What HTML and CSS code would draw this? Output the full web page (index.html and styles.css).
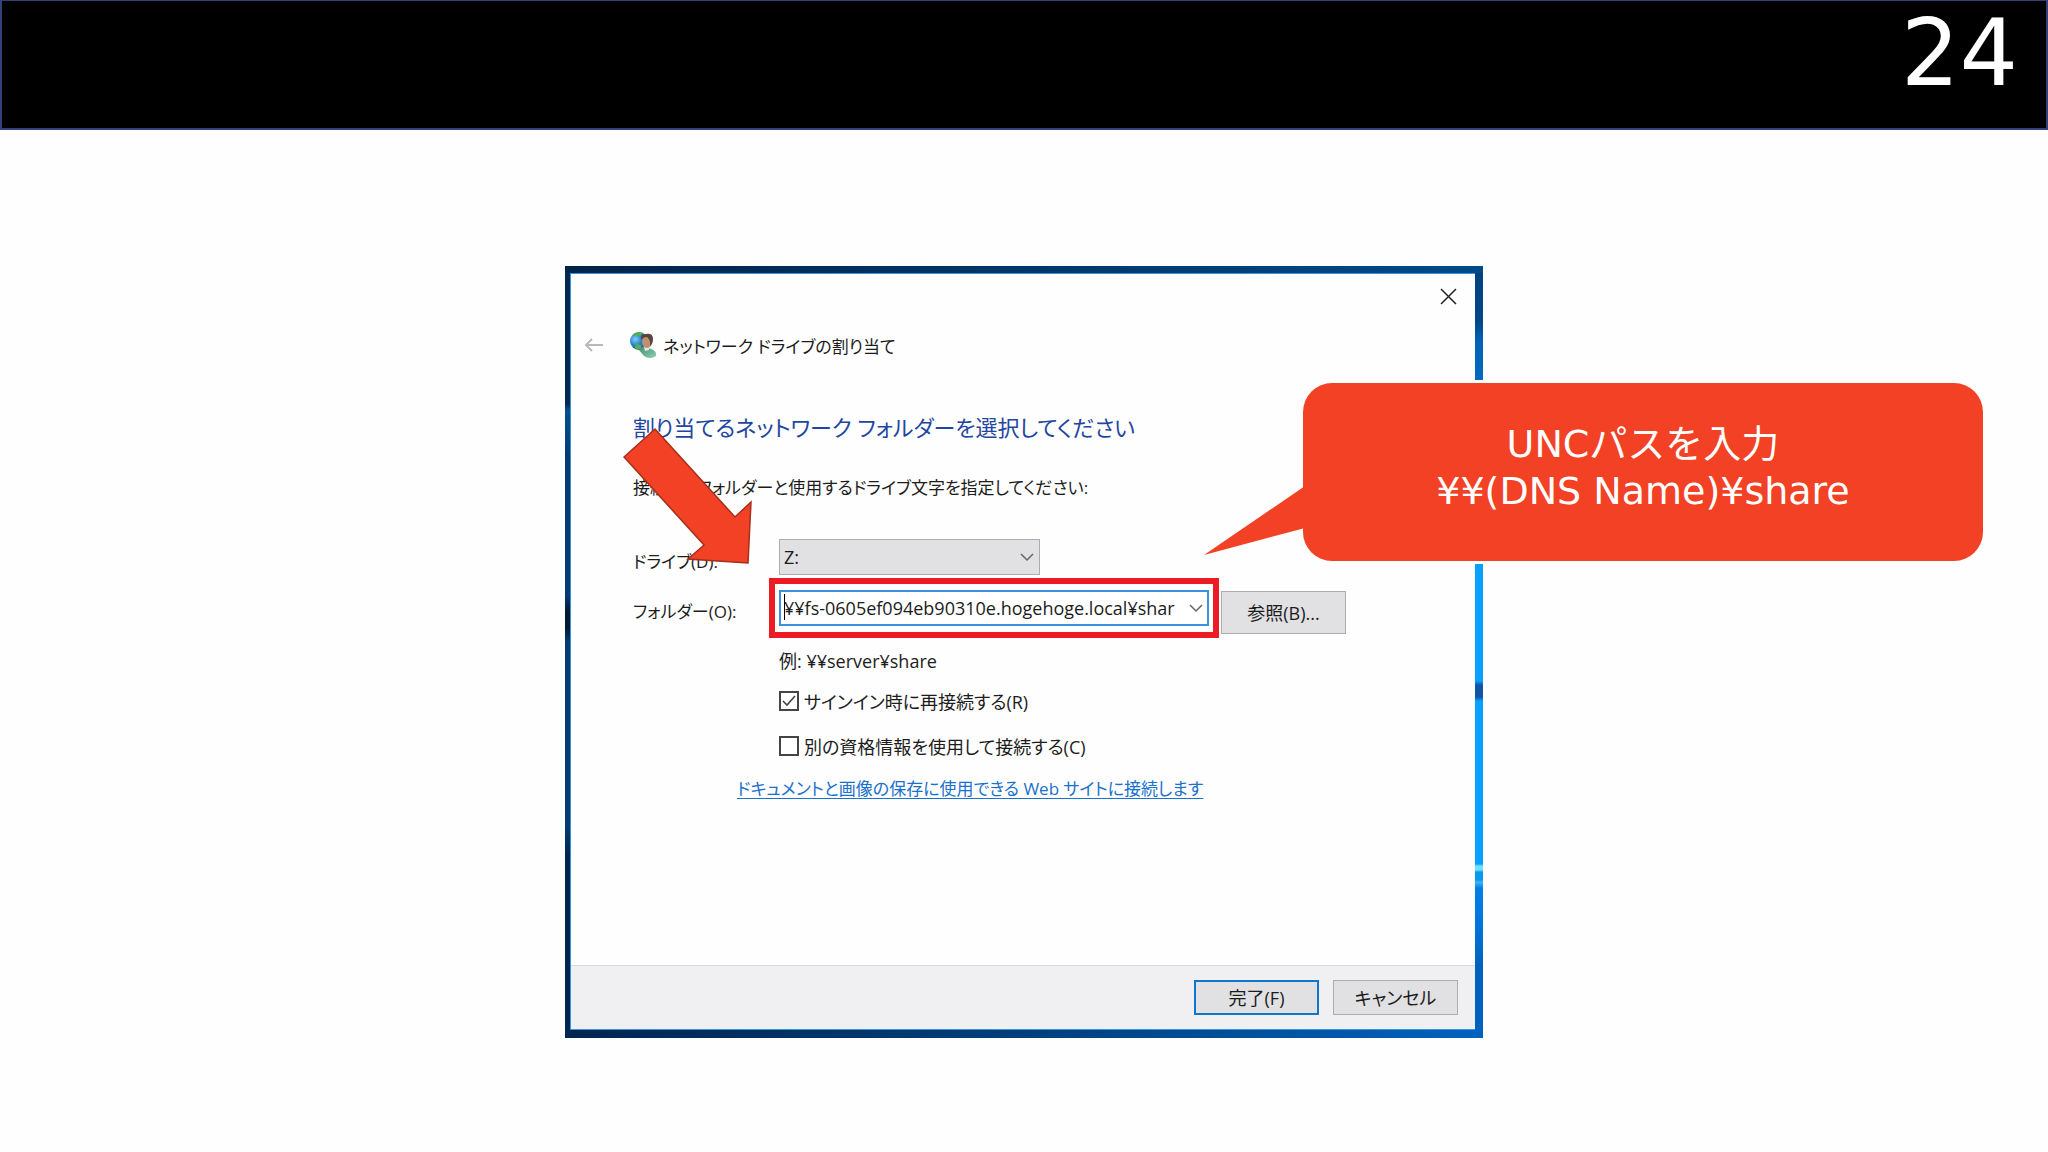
FILE: index.html
```html
<!DOCTYPE html>
<html lang="ja">
<head>
<meta charset="utf-8">
<title>ネットワーク ドライブの割り当て</title>
<link rel="stylesheet" href="styles.css">
</head>
<body>
<header class="slide-header"><span class="page-number">24</span></header>
<main class="slide-body">
  <div class="stage">
    <section class="desktop">
      <form class="dialog">
        <div class="titlebar">
          <button type="button" class="icon-button close" aria-label="閉じる">
            <svg width="17" height="17" viewBox="0 0 17 17"><path d="M1 1L16 16M16 1L1 16" fill="none" stroke="#222" stroke-width="1.5"/></svg>
          </button>
        </div>
        <div class="nav">
          <button type="button" class="icon-button back" aria-label="戻る">
            <svg width="20" height="16" viewBox="0 0 20 16"><path d="M19 8H2M8 2L2 8L8 14" fill="none" stroke="#b9b9b9" stroke-width="2"/></svg>
          </button>
          <svg class="app-icon" width="28" height="28" viewBox="0 0 28 28">
            <defs>
              <radialGradient id="globe" cx=".3" cy=".4" r=".75"><stop offset="0" stop-color="#7fd0f5"/><stop offset=".45" stop-color="#2c83c4"/><stop offset="1" stop-color="#174c8c"/></radialGradient>
              <linearGradient id="coat" x2="1" y2="1"><stop offset="0" stop-color="#3f8f70"/><stop offset="1" stop-color="#8fd0b0"/></linearGradient>
            </defs>
            <circle cx="10" cy="10" r="9" fill="url(#globe)"/>
            <path d="M4 3Q9 0 14 2L11 5L6 5ZM7 13L12 14L12 18Q8 19 6 17Z" fill="#58ad55"/>
            <path d="M10 19Q12 15 17 16L22 18Q28 20 27 25Q21 29 15 25Z" fill="url(#coat)"/>
            <path d="M15 16L20 15L20 19L16 20Z" fill="#e3e8e2"/>
            <ellipse cx="18" cy="11" rx="5" ry="6" fill="#bd9170"/>
            <path d="M12 9Q11 3 17 3Q24 2 24 8Q24 13 21 15Q22 9 18 6Q14 6 12 9Z" fill="#5a4438"/>
          </svg>
          <span class="app-title">ネットワーク ドライブの割り当て</span>
        </div>
        <div class="content">
          <h1 class="heading">割り当てるネットワーク フォルダーを選択してください</h1>
          <p class="lead">接続するフォルダーと使用するドライブ文字を指定してください:</p>
          <div class="fields">
            <label class="label label-drive" for="drive">ドライブ(D):</label>
            <div class="drive-wrap">
              <select class="drive" id="drive"><option>Z:</option></select>
              <svg class="chevron" width="14" height="9" viewBox="0 0 14 9"><path d="M1 1L7 7L13 1" fill="none" stroke="#666" stroke-width="1.5"/></svg>
            </div>
            <label class="label" for="folder">フォルダー(O):</label>
            <div class="folder-row">
              <div class="combo">
                <input class="folder" id="folder" type="text" value="¥¥fs-0605ef094eb90310e.hogehoge.local¥shar">
                <span class="caret"></span>
                <svg class="chevron" width="14" height="9" viewBox="0 0 14 9"><path d="M1 1L7 7L13 1" fill="none" stroke="#666" stroke-width="1.5"/></svg>
                <span class="highlight"></span>
              </div>
              <button type="button" class="button browse">参照(B)...</button>
            </div>
          </div>
          <div class="options">
            <p class="hint">例: ¥¥server¥share</p>
            <label class="check"><input type="checkbox" checked>サインイン時に再接続する(R)</label>
            <label class="check"><input type="checkbox">別の資格情報を使用して接続する(C)</label>
          </div>
          <a class="link" href="#">ドキュメントと画像の保存に使用できる Web サイトに接続します</a>
        </div>
        <div class="footer">
          <button type="button" class="button primary">完了(F)</button>
          <button type="button" class="button">キャンセル</button>
        </div>
      </form>
    </section>
    <svg class="arrow" width="130" height="138" viewBox="0 0 130 138"><path d="M32 2L1 30L81 118L65 132L125 136L128 75L112 90Z" fill="#f24124" stroke="#a52f1a" stroke-width="1.5"/></svg>
    <div class="callout">
      <svg class="callout-tail" width="104" height="76" viewBox="0 0 104 76"><path d="M104 4L3 73L104 46Z" fill="#f24124"/></svg>
      <p class="callout-text">UNCパスを入力<br>¥¥(DNS Name)¥share</p>
    </div>
  </div>
</main>
</body>
</html>
```
FILE: styles.css
```css
* { box-sizing: border-box; }
body {
  margin: 0;
  min-height: 100vh;
  background: #fefefe;
  color: #1c1c1c;
  font-family: "Open Sans", "Noto Sans CJK JP", sans-serif;
  font-size: 18px;
  font-feature-settings: "palt";
}
p, h1 { margin: 0; }
button, input, select { font: inherit; font-feature-settings: inherit; color: inherit; }

.slide-header {
  height: 130px;
  padding: 0 28px;
  background: #000;
  border: 2px solid #35407a;
  border-top-width: 1px;
  text-align: right;
}
.page-number {
  color: #fff;
  font-family: "DejaVu Sans", sans-serif;
  font-size: 92px;
  line-height: 106px;
}
.slide-body { display: flex; justify-content: center; padding: 136px 0 112px; }
.stage { position: relative; width: 918px; }

.desktop {
  padding: 7px 8px 8px 5px;
  background:
    linear-gradient(90deg, #002348, #004a8a) top / 100% 7px no-repeat,
    linear-gradient(90deg, #002550, #003f7c 50%, #0062bf) bottom / 100% 8px no-repeat,
    linear-gradient(#002850 138px, #005090 144px, #003a75 190px, #003a75 330px, #001a35 345px, #001a35 362px, #003a70 375px, #003a70 560px, #002450 590px) left / 5px 100% no-repeat,
    linear-gradient(#004080, #004888 56px, #0063b8 76px, #0078d0 200px, #0aa0ff 290px, #0aa0ff 415px, #0f55a8 419px, #0f55a8 431px, #0aa0ff 435px, #0aa0ff 598px, #70e0ff 600px, #70e0ff 604px, #0898f0 606px, #0898f0 614px, #3fb5f5 616px, #0080e6 622px, #0078e0 650px, #0062bd 700px) right / 8px 100% no-repeat;
}
.dialog {
  display: flex;
  flex-direction: column;
  min-height: 757px;
  background: #fefefe;
  border: 1px solid #3795dc;
  border-right-width: 0;
}
.titlebar { display: flex; justify-content: flex-end; height: 46px; padding: 14px 18px; }
.icon-button { display: flex; padding: 0; border: 0; background: none; }
.nav { display: flex; align-items: center; height: 50px; padding-left: 13px; }
.app-icon { margin-left: 25px; }
.app-title { margin-left: 6px; font-size: 17px; }
.content { padding: 39px 62px 0; }
.heading { font-size: 22px; font-weight: 400; line-height: 36px; color: #1f46a0; }
.lead { margin-top: 29px; font-size: 17px; line-height: 28px; }
.fields {
  display: grid;
  grid-template-columns: 146px 1fr;
  row-gap: 15px;
  align-items: center;
  margin-top: 37px;
}
.label { font-size: 17px; line-height: 26px; }
.label-drive { align-self: end; }
.drive-wrap, .combo { position: relative; height: 36px; }
.drive-wrap { width: 261px; }
.drive {
  appearance: none;
  width: 100%;
  height: 100%;
  padding: 0 4px;
  border: 1px solid #acacb0;
  border-radius: 0;
  background: #e1e0e2;
}
.chevron { position: absolute; right: 6px; top: 14px; }
.folder-row { display: flex; gap: 12px; }
.combo { width: 430px; }
.folder {
  width: 100%;
  height: 100%;
  padding: 0 26px 0 3px;
  border: 2px solid #3c92dc;
  background: #fff;
  outline: 0;
}
.caret { position: absolute; left: 5px; top: 4px; width: 1px; height: 26px; background: #000; }
.highlight { position: absolute; inset: -12px -10px; border: 6px solid #ed1c24; pointer-events: none; }
.button {
  width: 125px;
  height: 35px;
  padding: 0 0 2px;
  border: 1px solid #adadb0;
  background: #e1e0e2;
}
.browse { height: 43px; margin-top: 1px; }
.options { display: flex; flex-direction: column; padding: 14px 0 0 146px; }
.hint { line-height: 26px; margin-bottom: 4px; }
.check { display: flex; align-items: center; gap: 5px; height: 45px; }
.check input {
  appearance: none;
  width: 20px;
  height: 20px;
  margin: 0;
  border: 2px solid #444;
  background: #fff;
}
.check input:checked {
  background: url("data:image/svg+xml,%3Csvg xmlns='http://www.w3.org/2000/svg' viewBox='0 0 16 16'%3E%3Cpath d='M2 8L6 12L14 3' fill='none' stroke='%23444' stroke-width='1.6'/%3E%3C/svg%3E") center / 16px 16px no-repeat #fff;
}
.link {
  display: table;
  margin: 8px 0 0 104px;
  font-size: 17px;
  line-height: 26px;
  color: #1a70cc;
  text-underline-offset: 3px;
}
.footer {
  display: flex;
  justify-content: flex-end;
  gap: 14px;
  margin-top: auto;
  padding: 14px 17px;
  border-top: 1px solid #dcdcdc;
  background: #f0eff1;
}
.primary { border: 2px solid #1076ca; }

.arrow { position: absolute; left: 58px; top: 161px; }
.callout {
  position: absolute;
  left: 738px;
  top: 117px;
  display: flex;
  align-items: center;
  justify-content: center;
  width: 680px;
  height: 178px;
  padding-bottom: 8px;
  border-radius: 29px;
  background: #f24124;
  box-shadow: 0 0 0 3px #fefefe;
  color: #fff;
}
.callout-tail { position: absolute; left: -102px; top: 99px; }
.callout-text {
  font-family: "DejaVu Sans", "Noto Sans CJK JP", sans-serif;
  font-size: 38px;
  font-feature-settings: normal;
  line-height: 47px;
  text-align: center;
}
```
